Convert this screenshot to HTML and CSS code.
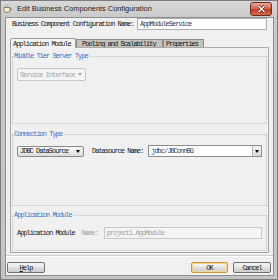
FILE: index.html
```html
<!DOCTYPE html>
<html lang="en">
<head>
  <meta charset="UTF-8">
  <title>Edit Business Components Configuration</title>
  <link rel="stylesheet" href="styles.css">
</head>
<body>
  <div class="window">
    <div class="titlebar">
      <svg class="app-icon" width="9" height="9" viewBox="0 0 9 9">
        <path d="M3 0.5 Q2 1.5 3 2.5 M5 0.5 Q4 1.5 5 2.5" stroke="#9a8a70" stroke-width="0.8" fill="none"/>
        <path d="M1 3.5 H7 V6.5 Q7 8.5 4 8.5 Q1 8.5 1 6.5 Z" fill="#f4ecd0" stroke="#7a6440" stroke-width="0.8"/>
        <path d="M7 4.2 Q8.6 4.4 8.2 5.8 Q7.8 6.6 6.8 6.4" stroke="#7a6440" stroke-width="0.8" fill="none"/>
      </svg>
      <span class="title">Edit Business Components Configuration</span>
      <div class="close">
        <svg width="9" height="8" viewBox="0 0 9 8">
          <path d="M1.5 1 L7.5 7 M7.5 1 L1.5 7" stroke="#4a1a10" stroke-width="2.6"/>
          <path d="M1.5 1 L7.5 7 M7.5 1 L1.5 7" stroke="#fff" stroke-width="1.4"/>
        </svg>
      </div>
    </div>

    <div class="client">
      <div class="name-row">
        <span>Business Component Configuration Name:</span>
        <div class="field name-field">AppModuleService</div>
      </div>

      <div class="tabs">
        <div class="tab active">Application Module</div>
        <div class="tab pooling">Pooling and Scalability</div>
        <div class="tab props">Properties</div>
      </div>

      <div class="panel">
        <div class="group group-server">
          <div class="group-title">Middle Tier Server Type</div>
          <div class="select select-disabled">
            <span>Service Interface</span>
            <i class="arrow"></i>
          </div>
        </div>

        <div class="group group-connection">
          <div class="group-title">Connection Type</div>
          <div class="row">
            <div class="select select-jdbc">
              <span>JDBC DataSource</span>
              <i class="arrow"></i>
            </div>
            <span class="ds-label">Datasource Name:</span>
            <div class="combo">
              <span class="combo-text">jdbc/JBConnBG</span>
              <span class="combo-btn"><i class="arrow"></i></span>
            </div>
          </div>
        </div>

        <div class="group group-module">
          <div class="group-title">Application Module</div>
          <div class="row">
            <span>Application Module</span>
            <span class="muted name-label">Name:</span>
            <div class="field module-field">project1.AppModule</div>
          </div>
        </div>
      </div>

      <div class="separator"></div>

      <div class="buttons">
        <div class="btn help"><u>H</u>elp</div>
        <div class="btn ok">OK</div>
        <div class="btn cancel">Cancel</div>
      </div>
    </div>
  </div>
</body>
</html>
```

FILE: styles.css
```css
body {
  margin: 0;
  background-color: #fff;
}

.window {
  width: 278px;
  height: 280px;
  box-sizing: border-box;
  border: 1px solid #7c7c7c;
  background: linear-gradient(#d8d8d8, #c9c9c9 16px, #c4c4c4);
  display: flex;
  flex-direction: column;
}

/* title bar */
.titlebar {
  height: 16px;
  display: flex;
  align-items: center;
  padding: 0 5px 0 2px;
}

.app-icon {
  flex: none;
  margin-top: -1px;
}

.title {
  margin-left: 5px;
  font: 7.4px/8px "Liberation Sans", Arial, sans-serif;
  color: #1e1e1e;
}

.close {
  margin-left: auto;
  width: 22px;
  height: 14px;
  box-sizing: border-box;
  border: 1px solid #6a2a1c;
  border-radius: 3px;
  background: linear-gradient(#eaa896, #d66a50 45%, #c23c22 55%, #d8684c);
  display: flex;
  align-items: center;
  justify-content: center;
}

/* dialog body */
.client {
  flex: 1;
  margin: 0 3px 3px 4px;
  border: 1px solid #8e8e8e;
  background-color: #f0f0f0;
  display: flex;
  flex-direction: column;
  font: 7px/8px "Liberation Mono", "Courier New", monospace;
  letter-spacing: -1px;
  color: #141414;
}

.name-row {
  height: 12px;
  display: flex;
  align-items: center;
  padding: 0 6px;
}

.field {
  height: 12px;
  box-sizing: border-box;
  display: flex;
  align-items: center;
  padding-left: 2px;
  border: 1px solid #abadb3;
  background-color: #fff;
}

.name-field {
  margin-left: auto;
  width: 130px;
  color: #2a3a5a;
}

/* tabs */
.tabs {
  height: 9px;
  margin-top: 8px;
  padding-left: 4px;
  display: flex;
  align-items: flex-end;
}

.tab {
  height: 8px;
  box-sizing: border-box;
  border: 1px solid #8e8c88;
  border-bottom: none;
  background-color: #c5c2bb;
  display: flex;
  align-items: center;
  white-space: nowrap;
}

.tab.active {
  position: relative;
  z-index: 1;
  width: 66px;
  height: 10px;
  margin-bottom: -1px;
  padding-left: 2px;
  border-color: #9c9c9c;
  border-radius: 2px 2px 0 0;
  background-color: #f4f4f4;
}

.tab.pooling {
  width: 87px;
  padding-left: 5px;
}

.tab.props {
  width: 41px;
  padding-left: 2px;
}

.panel {
  margin: 0 4px;
  border: 1px solid #a9a9a9;
  padding: 8px 1px 1px;
  background-color: #f0f0f0;
}

/* group boxes */
.group {
  box-sizing: border-box;
  border: 1px dotted #bdbdbd;
  padding: 0 4px;
}

.group-title {
  width: fit-content;
  margin: -5px 0 0 -4px;
  padding: 0 1px;
  background-color: #f0f0f0;
  color: #3d6fc4;
}

.group-server {
  height: 68px;
}

.group-connection {
  height: 72px;
  margin-top: 10px;
}

.group-module {
  height: 36px;
  margin-top: 9px;
}

.group-server .select {
  margin-top: 8px;
}

.group-connection .row {
  margin-top: 7px;
}

.group-module .row {
  margin-top: 8px;
}

.row {
  height: 12px;
  display: flex;
  align-items: center;
  white-space: nowrap;
}

.select {
  box-sizing: border-box;
  display: flex;
  align-items: center;
  padding-left: 2px;
  border-radius: 2px;
}

.select .arrow {
  margin-left: auto;
  margin-right: 3px;
}

.arrow {
  width: 0;
  height: 0;
  border-left: 2.5px solid transparent;
  border-right: 2.5px solid transparent;
  border-top: 3px solid #000;
}

.select-disabled {
  width: 69px;
  height: 13px;
  border: 1px solid #c6c6c6;
  background-color: #f4f4f4;
  color: #a6a6a6;
}

.select-disabled .arrow {
  border-top-color: #a8a8a8;
}

.select-jdbc {
  width: 67px;
  height: 11px;
  border: 1px solid #8a8a8a;
  background: linear-gradient(#f8f8f8, #ececec 50%, #dcdcdc);
}

.ds-label {
  margin-left: 8px;
}

.combo {
  flex: 1;
  height: 12px;
  margin-left: 5px;
  box-sizing: border-box;
  border: 1px solid #8d8d8d;
  background-color: #fff;
  display: flex;
}

.combo-text {
  padding-left: 2px;
  align-self: center;
  color: #2a3a5a;
}

.combo-btn {
  margin-left: auto;
  width: 8px;
  border-left: 1px solid #b4b4b4;
  background: linear-gradient(#f4f4f4, #dadada);
  display: flex;
  align-items: center;
  justify-content: center;
}

.muted {
  color: #a2a2a2;
}

.name-label {
  margin-left: 7px;
}

.module-field {
  flex: 1;
  margin-left: 6px;
  border-color: #c8c8c8;
  background-color: #f4f4f4;
  color: #a2a2a2;
}

.separator {
  margin-top: 2px;
  border-top: 1px solid #cfcfcf;
  border-bottom: 1px solid #fff;
}

/* buttons */
.buttons {
  margin-top: 5px;
  padding: 0 2px 0 1px;
  display: flex;
}

.btn {
  width: 38px;
  height: 11px;
  box-sizing: border-box;
  border: 1px solid #707070;
  border-radius: 2px;
  background: linear-gradient(#f3f3f3, #ebebeb 45%, #dddddd 50%, #cfcfcf);
  display: flex;
  align-items: center;
  justify-content: center;
}

.btn u {
  text-decoration: underline;
}

.btn.ok {
  width: 37px;
  margin-left: auto;
  border-color: #cf9638;
  box-shadow: inset 0 0 0 1px #f5d58c;
}

.btn.cancel {
  margin-left: 5px;
}
```
